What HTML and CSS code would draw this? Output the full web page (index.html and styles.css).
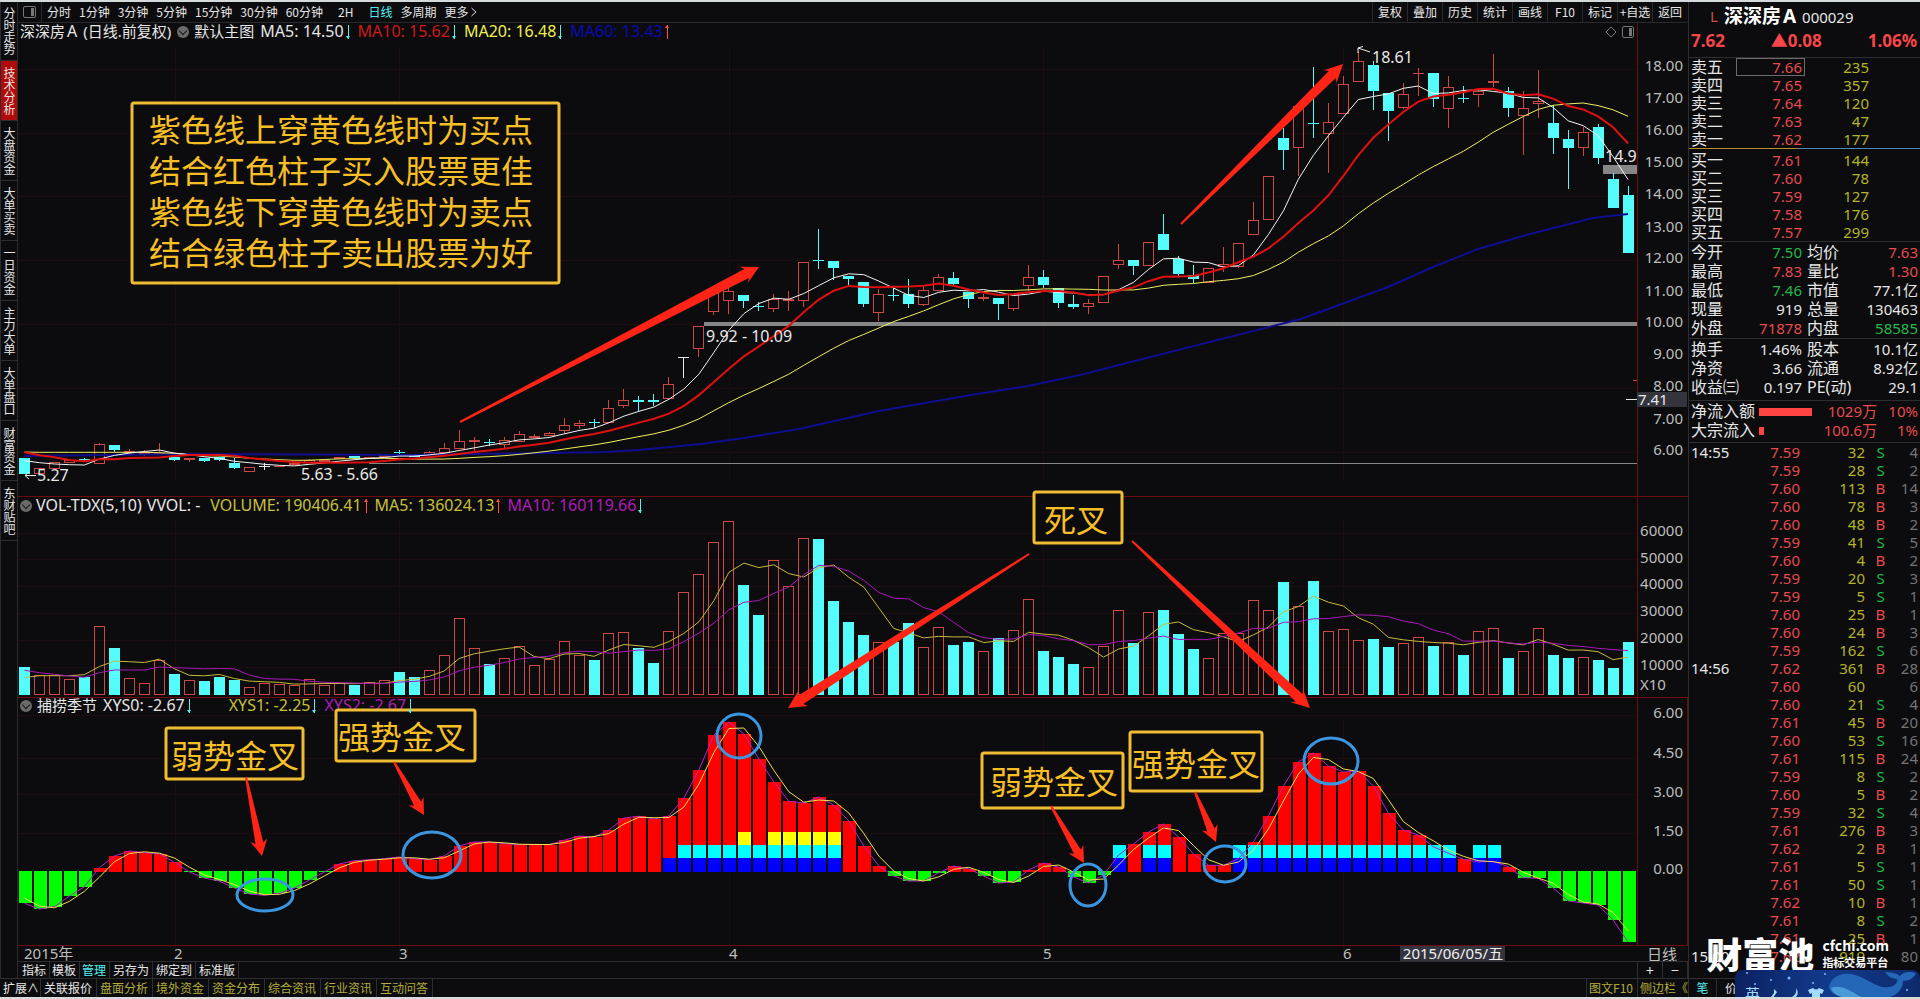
FILE: index.html
```html
<!DOCTYPE html>
<html lang="zh-CN">
<head>
<meta charset="utf-8">
<title>深深房A 000029</title>
<link rel="stylesheet" href="styles.css">
</head>
<body>
<div class="app">
  <div class="left">
    <div class="work">
      <nav class="side">
        <button>分时走势</button>
        <button class="active">技术分析</button>
        <button>大盘资金</button>
        <button>大单买卖</button>
        <button>一日资金</button>
        <button>主力大单</button>
        <button>大单盘口</button>
        <button>财富资金</button>
        <button>东财贴吧</button>
      </nav>
      <main class="main">
        <header class="toolbar">
          <button class="panel-btn" aria-label="面板"><svg width="13" height="12" viewBox="0 0 13 12"><rect x=".5" y=".5" width="12" height="11" rx="1.5" fill="none" stroke="#777"/><rect x="8" y="2" width="3" height="8" fill="#777"/></svg></button>
          <div class="periods">
            <button>分时</button><button>1分钟</button><button>3分钟</button><button>5分钟</button><button>15分钟</button><button>30分钟</button><button>60分钟</button><button class="wide">2H</button><button class="on">日线</button><button>多周期</button><button class="more">更多<svg width="8" height="10" viewBox="0 0 8 10"><path d="M1.500 1L6 5L1.500 9" fill="none" stroke="#ddd"/></svg></button>
          </div>
          <div class="tools">
            <button>复权</button><button>叠加</button><button>历史</button><button>统计</button><button>画线</button><button>F10</button><button>标记</button><button>+自选</button><button>返回</button>
          </div>
        </header>
        <div class="stage">
          <div class="legend legend-1">
            <span class="cjk">深深房<span class="lat">A</span></span>
            <span class="cjk">(日线.前复权)</span>
            <i class="drop"></i>
            <span class="cjk">默认主图</span>
            <span class="val">MA5: 14.50<b class="down"></b></span>
            <span class="val red">MA10: 15.62<b class="down"></b></span>
            <span class="val yellow">MA20: 16.48<b class="down"></b></span>
            <span class="val blue">MA60: 13.43<b class="up"></b></span>
            <svg class="pane-icons" width="30" height="12" viewBox="0 0 30 12"><path d="M6 1L11 6L6 11L1 6Z" fill="none" stroke="#777"/><rect x="17.500" y=".5" width="11" height="11" rx="1.500" fill="none" stroke="#777"/><rect x="24" y="2" width="3" height="8" fill="#777"/></svg>
          </div>
          <div class="legend legend-2">
            <i class="drop"></i>
            <span>VOL-TDX(5,10)</span>
            <span>VVOL: -</span>
            <span class="val olive first">VOLUME: 190406.41<b class="up"></b></span>
            <span class="val olive">MA5: 136024.13<b class="up"></b></span>
            <span class="val purple">MA10: 160119.66<b class="down"></b></span>
          </div>
          <div class="legend legend-3">
            <i class="drop"></i>
            <span class="cjk">捕捞季节</span>
            <span class="val">XYS0: -2.67<b class="down"></b></span>
            <span class="val olive second">XYS1: -2.25<b class="down"></b></span>
            <span class="val purple">XYS2: -2.67<b class="down"></b></span>
          </div>
          <svg id="chart" class="chart" viewBox="18 23 1670 938" role="img" aria-label="K线图"></svg>
        </div>
        <div class="indicators">
          <div class="tabs">
            <button>指标</button><button>模板</button><button class="on">管理</button><button>另存为</button><button>绑定到</button><button>标准版</button>
          </div>
          <div class="zoomers"><button>+</button><button>−</button></div>
        </div>
      </main>
    </div>
    <footer class="bottom">
      <button class="white expand">扩展∧</button><button class="white">关联报价</button><button>盘面分析</button><button>境外资金</button><button>资金分布</button><button>综合资讯</button><button>行业资讯</button><button>互动问答</button>
      <span class="right"><button>图文F10</button><button>侧边栏《</button></span>
    </footer>
  </div>

  <aside class="quote">
    <h1 class="name"><span class="mark">L</span><span class="stock">深深房<span class="share">A</span></span><span class="code">000029</span></h1>
    <div class="last"><span>7.62</span><span>▲0.08</span><span>1.06%</span></div>
    <table class="book sells">
      <tr><th>卖五</th><td class="boxed">7.66</td><td>235</td><td></td></tr>
      <tr><th>卖四</th><td>7.65</td><td>357</td><td></td></tr>
      <tr><th>卖三</th><td>7.64</td><td>120</td><td></td></tr>
      <tr><th>卖二</th><td>7.63</td><td>47</td><td></td></tr>
      <tr><th>卖一</th><td>7.62</td><td>177</td><td></td></tr>
    </table>
    <div class="split"></div>
    <table class="book buys">
      <tr><th>买一</th><td>7.61</td><td>144</td><td></td></tr>
      <tr><th>买二</th><td>7.60</td><td>78</td><td></td></tr>
      <tr><th>买三</th><td>7.59</td><td>127</td><td></td></tr>
      <tr><th>买四</th><td>7.58</td><td>176</td><td></td></tr>
      <tr><th>买五</th><td>7.57</td><td>299</td><td></td></tr>
    </table>
    <table class="stats">
      <tr><th>今开</th><td class="green">7.50</td><th>均价</th><td class="red">7.63</td></tr>
      <tr><th>最高</th><td class="red">7.83</td><th>量比</th><td class="red">1.30</td></tr>
      <tr><th>最低</th><td class="green">7.46</td><th>市值</th><td>77.1亿</td></tr>
      <tr><th>现量</th><td>919</td><th>总量</th><td>130463</td></tr>
      <tr><th>外盘</th><td class="red">71878</td><th>内盘</th><td class="green">58585</td></tr>
    </table>
    <table class="stats last-stats">
      <tr><th>换手</th><td>1.46%</td><th>股本</th><td>10.1亿</td></tr>
      <tr><th>净资</th><td>3.66</td><th>流通</th><td>8.92亿</td></tr>
      <tr><th>收益㈢</th><td>0.197</td><th>PE(动)</th><td>29.1</td></tr>
    </table>
    <div class="flow">
      <div class="flow-row"><span class="label">净流入额</span><span class="track"><i style="width:100%"></i></span><span>1029万</span><span>10%</span></div>
      <div class="flow-row"><span class="label">大宗流入</span><span class="track"><i style="width:10%"></i></span><span>100.6万</span><span>1%</span></div>
    </div>
    <div class="ticks"><table id="ticks"></table></div>
    <div class="quote-foot"><button class="on">笔</button><button>价</button></div>
    <div class="brand"><strong>财富池</strong><span><b>cfchi.com</b><em>指标交易平台</em></span></div>
    <div class="ime">
      <svg viewBox="0 0 185 28" preserveAspectRatio="xMaxYMin slice">
        <defs><linearGradient id="sea" x1="0" x2="1"><stop offset="0" stop-color="#0c2160"/><stop offset=".5" stop-color="#123a8c"/><stop offset="1" stop-color="#0e2a6c"/></linearGradient></defs>
        <rect width="185" height="40" rx="8" fill="url(#sea)"/>
        <path d="M94 17C96 6 108 1 120 5C134 9 142 19 154 17C160 16 163 12 162 9C156 9 152 5 150 2C156 2 161 3 165 6C168 2 174 1 181 3C179 8 174 11 168 11C168 20 160 28 148 28H112C103 27 95 23 94 17Z" fill="#2466b8"/>
        <path d="M96 18C106 14 114 20 128 28H112C103 27 97 23 96 18Z" fill="#4b9ad8"/>
        <g fill="#7db8ff"><circle cx="12" cy="3" r="1"/><circle cx="36" cy="10" r="1"/><circle cx="54" cy="8" r="1.500"/><circle cx="90" cy="4" r="1"/><circle cx="78" cy="13" r="1"/><circle cx="20" cy="14" r="1"/><circle cx="172" cy="20" r="1"/></g>
        <text x="10" y="30" class="ime-text">英</text>
        <g fill="#a4dcff"><path d="M39 19L42 22L38 28L36 27L39 23Z"/><path d="M61 18C64 22 63 27 58 28H55C60 26 62 23 61 18Z"/><path d="M73 20L78 18Q81 21 84 18L89 20L87 24L85 23V30H77V23L75 24Z"/></g>
      </svg>
    </div>
  </aside>
</div>
<script src="chart.js"></script>
</body>
</html>
```

FILE: styles.css
```css
* { box-sizing: border-box; }
body {
  margin: 0;
  background: #0c0c0e;
  color: #e6e6e6;
  font-family: "Noto Sans", "Noto Sans CJK SC", sans-serif;
  font-size: 15px;
  overflow: hidden;
}
button {
  margin: 0; padding: 0; border: 0; background: none; color: #e6e6e6;
  font: 12px/16px "Noto Sans CJK SC", sans-serif; white-space: nowrap; cursor: pointer;
}
.app {
  display: grid;
  grid-template-columns: minmax(0, 1fr) 232px;
  height: 100vh;
  border-top: 2px solid #d6dadb;
  border-bottom: 2px solid #d6dadb;
}
.left { display: flex; flex-direction: column; min-height: 0; min-width: 0; }
.work { display: flex; flex: 1; min-height: 0; }

.side { width: 18px; border-right: 1px solid #2c2c2e; border-left: 1px solid #2c2c2e; }
.side button {
  display: flex; align-items: center; justify-content: center;
  width: 16px; height: 60px; border-bottom: 1px solid #2c2c2e;
  writing-mode: vertical-rl; text-orientation: upright; line-height: 16px; font-size: 12px;
}
.side button:first-child { height: 59px; }
.side .active { background: #b00a0a; }

.main { display: flex; flex-direction: column; flex: 1; min-width: 0; }
.toolbar { display: flex; align-items: stretch; height: 21px; border-bottom: 1px solid #2a2a2c; }
.panel-btn { width: 24px; padding-left: 5px; border-right: 1px solid #2a2a2c; display: flex; align-items: center; }
.periods { display: flex; gap: 8px; padding-left: 5px; align-items: center; }
.periods .wide { padding: 0 7px; }
.periods .more { display: flex; align-items: center; gap: 2px; }
.on { color: #54f0f0; }
.tools { display: flex; margin: 0 1px 0 auto; }
.tools button { width: 35px; border-left: 1px solid #2a2a2c; text-align: center; }

.stage { display: grid; grid-template-rows: 474fr 200fr 264fr; grid-template-columns: minmax(0, 1fr); flex: 1; min-height: 0; }
.chart { grid-area: 1 / 1 / -1 / -1; width: 100%; height: 100%; min-height: 0; overflow: visible; }
.legend { grid-column: 1; display: flex; align-items: center; height: 17px; font-size: 16px; line-height: 17px; padding-left: 2px; white-space: nowrap; gap: 6px; }
.legend-1 { grid-row: 1; padding-right: 53px; }
.legend-2 { grid-row: 2; gap: 5px; }
.legend-3 { grid-row: 3; }
.cjk { font-size: 15px; }
.lat { font-size: 16px; margin-left: 2px; }
.val { display: flex; align-items: center; gap: 1px; }
.legend .first { margin-left: 5px; }
.legend .second { margin-left: 30px; }
.drop { width: 12px; height: 12px; margin-right: -1px; border-radius: 50%; background: #6a6a6a; display: grid; place-items: center; }
.drop::after { content: ""; width: 5px; height: 5px; border: solid #1a1a1a; border-width: 0 1px 1px 0; transform: translateY(-1px) rotate(45deg); }
.down, .up { position: relative; width: 7px; height: 14px; color: #54f0f0; background: linear-gradient(currentColor, currentColor) center / 1px 100% no-repeat; }
.up { color: #ff5040; }
.down::after, .up::after { content: ""; position: absolute; left: 1px; border: 3px solid transparent; border-left-width: 2px; border-right-width: 2px; }
.down::after { bottom: 0; border-top-color: currentColor; border-bottom: 0; }
.up::after { top: 0; border-bottom-color: currentColor; border-top: 0; }
.pane-icons { margin-left: auto; }
.red { color: #f0464a; }
.green { color: #22b84c; }
.legend .red { color: #d01818; }
.yellow { color: #f0f050; }
.blue { color: #0a0ab4; }
.olive { color: #c8c03c; }
.purple { color: #b01cb8; }

.indicators { display: flex; justify-content: space-between; height: 17px; border-top: 1px solid #2e2e30; }
.tabs { display: flex; }
.tabs button { padding: 0 3px 0 2px; border-right: 1px solid #2e2e30; }
.tabs button:first-child { padding-left: 4px; }
.tabs button:nth-child(n+4) { padding: 0 3px; }
.zoomers { display: flex; width: 51px; border-left: 1px solid #2e2e30; }
.zoomers button { flex: 1; border-right: 1px solid #2e2e30; font-size: 14px; }
.bottom { display: flex; height: 19px; border-top: 1px solid #2e2e30; }
.bottom button { padding: 0 4px 0 3px; border-right: 1px solid #2e2e30; color: #b4ac3c; }
.bottom .expand { padding-right: 1px; }
.bottom .white { color: #e6e6e6; }
.bottom .right { display: flex; margin-left: auto; border-left: 1px solid #2e2e30; }
.bottom .right button { padding-left: 2px; }
.bottom .right button:last-child { padding-right: 0; border-right: 0; }

.grid-line { stroke: #2a0e10; stroke-dasharray: 1 1; }
.frame { stroke: #6c0c0e; fill: none; }
.gap { fill: #868686; }
.rise { fill: none; stroke: #cc4844; }
.flat { stroke: #e8e8e8; fill: #e8e8e8; }
.fall { fill: #54fcfc; stroke: #54fcfc; }
.bar { shape-rendering: crispEdges; }
.line { fill: none; stroke-width: 1; }
.line.thick { stroke-width: 2; }
.pos { fill: #ff0000; }
.neg { fill: #00ff00; }
.axis { fill: #bebebe; font-size: 15px; }
.note { fill: #e8e8e8; font-size: 16px; }
.call rect { fill: #0c0c0e; stroke: #f0bc34; stroke-width: 3; }
.call text { fill: #f6bf26; font-size: 32px; font-family: "Noto Sans CJK SC", sans-serif; font-weight: 400; }
.arrow { fill: #ff2416; }
.ring { fill: none; stroke: #3a96e0; stroke-width: 3; }

.quote { position: relative; display: flex; flex-direction: column; border-left: 1px solid #2e2e30; min-height: 0; overflow: hidden; }
.name { display: flex; align-items: center; height: 27px; margin: 0; padding-left: 21px; font-weight: 400; }
.mark { color: #d8484a; font-size: 15px; margin-right: 6px; }
.stock { color: #fff; font-size: 19px; font-weight: 700; margin-right: 6px; line-height: 24px; }
.share { margin-left: 2px; }
.code { font-size: 15px; padding-top: 3px; }
.last { display: flex; justify-content: space-between; height: 29px; padding: 0 3px 0 2px; line-height: 24px; font-size: 17px; font-weight: 700; color: #f8464a; border-bottom: 1px solid #2e2e30; }
table { border-collapse: collapse; table-layout: fixed; width: 100%; }
th { padding: 0 0 0 2px; font-weight: 400; font-size: 16px; text-align: left; white-space: nowrap; }
td { padding: 0; text-align: right; white-space: nowrap; }
.book tr, #ticks tr { height: 18px; line-height: 18px; }
.book th:first-child { width: 47px; }
.book td:nth-child(2) { width: 69px; padding-right: 3px; color: #e84a4e; }
.book td:nth-child(3) { width: 64px; color: #b4b428; }
.book .boxed { outline: 1px solid #6c6c6c; outline-offset: -1px; }
.split { height: 1px; background: linear-gradient(90deg, #b8902c 46%, #4a88b8 48%); }
.buys { margin-top: 2px; }
.stats { border-top: 1px solid #2e2e30; border-collapse: separate; border-spacing: 0; padding-top: 1px; }
.stats tr { height: 19px; line-height: 19px; }
.stats th { width: 51px; }
.stats td:nth-child(2) { width: 62px; }
.stats th:nth-child(3) { padding-left: 5px; }
.stats td:last-child { padding-right: 2px; }
.stats .red { color: #e84a4e; }
.last-stats { padding-bottom: 3px; }
.flow { border-top: 1px solid #2e2e30; border-bottom: 1px solid #2e2e30; padding: 1px 0 2px; color: #e84a4e; }
.flow-row { display: grid; grid-template-columns: 70px 53px 1fr 41px; height: 19px; line-height: 19px; padding-right: 2px; align-items: center; text-align: right; }
.flow .label { color: #e6e6e6; font-size: 16px; padding-left: 2px; text-align: left; }
.track { display: block; height: 8px; }
.track i { display: block; height: 8px; background: #ff4444; }
.ticks { flex: 1; min-height: 0; overflow: hidden; }
#ticks td:first-child { width: 61px; padding-left: 2px; text-align: left; color: #e6e6e6; }
#ticks td { color: #e84a4e; }
#ticks td:nth-child(2) { width: 50px; }
#ticks td:nth-child(3) { width: 65px; color: #b4b428; }
#ticks td:nth-child(4) { width: 31px; text-align: center; }
#ticks td:nth-child(4).s { color: #22b84c; }
#ticks td:last-child { padding-right: 2px; color: #747474; }
.quote-foot { display: flex; height: 19px; border-top: 1px solid #2e2e30; }
.quote-foot button { width: 28px; padding-left: 0; border-right: 1px solid #2e2e30; }
.quote-foot button + button { width: 36px; padding-right: 0; border-right: 0; padding-left: 8px; text-align: left; }
.brand { position: absolute; right: 31px; bottom: 26px; display: flex; align-items: center; gap: 8px; color: #fff; font-family: "Noto Sans CJK SC", sans-serif; }
.brand strong { font-size: 36px; line-height: 36px; font-weight: 900; }
.brand span { display: flex; flex-direction: column; }
.brand b { font-size: 14px; line-height: 18px; }
.brand em { font-size: 11px; line-height: 16px; font-weight: 700; font-style: normal; }
.ime { position: absolute; right: 0; bottom: 0; width: 185px; height: 27px; }
.ime svg { display: block; width: 100%; height: 100%; }
.ime-text { font-size: 15px; fill: #a4dcff; font-family: "Noto Sans CJK SC", sans-serif; }
```

FILE: chart.js
```js
const NS = "http://www.w3.org/2000/svg";
const chart = document.getElementById("chart");

function el(name, attrs, text) {
  const node = document.createElementNS(NS, name);
  for (const key in attrs) node.setAttribute(key, attrs[key]);
  if (text !== undefined) node.textContent = text;
  chart.appendChild(node);
  return node;
}
const rect = (x, y, width, height, cls) => el("rect", { x, y, width, height, class: cls });
const hline = (x1, x2, y, cls) => el("path", { d: `M${x1} ${y}H${x2}`, class: cls });
const vline = (x, y1, y2, cls) => el("path", { d: `M${x} ${y1}V${y2}`, class: cls });
const label = (x, y, text, cls, anchor) => el("text", { x, y, class: cls, "text-anchor": anchor || "start" }, text);

const X = i => 24 + 14.987 * i;
const R = Math.round;

/* Grid and frames */
[69, 133, 196, 260, 324, 388, 452, 559, 586, 613, 640, 667, 533, 715, 758, 794, 833].forEach(y => hline(19, 1637, y + 0.5, "grid-line"));
[175, 399, 729, 1043, 1343].forEach(x => {
  vline(x + 0.5, 48, 480, "grid-line");
  vline(x + 0.5, 520, 695, "grid-line");
  vline(x + 0.5, 720, 960, "grid-line");
});
hline(18, 1688, 496.5, "frame");
hline(18, 1688, 697.5, "frame");
hline(18, 1688, 945.5, "frame");
vline(1637.5, 23, 945, "frame");
vline(1687.5, 697, 945, "frame");

/* Axis labels */
[66, 98, 130, 162, 194, 227, 258, 291, 322, 354, 386, 419, 450].forEach((y, i) => label(1683, y + 5, (18 - i).toFixed(2), "axis", "end"));
[530, 557, 583, 610, 637, 664].forEach((y, i) => label(1683, y + 6, 60000 - i * 10000, "axis", "end"));
label(1640, 690, "X10", "axis");
[712, 752, 791, 830, 868].forEach((y, i) => label(1683, y + 6, (6 - i * 1.5).toFixed(2), "axis", "end"));
label(24, 959, "2015年", "axis");
[[174, 2], [399, 3], [729, 4], [1043, 5], [1343, 6]].forEach(([x, m]) => label(x, 959, m, "axis"));
rect(1400, 946, 105, 15, "").setAttribute("fill", "#34343e");
label(1453, 959, "2015/06/05/五", "axis", "middle").setAttribute("style", "fill:#f0f0f0");
label(1662, 960, "日线", "axis", "middle");

/* Price gaps */
rect(704, 322, 933, 4, "gap");
rect(1603, 165, 34, 9, "gap");
rect(369, 463, 1268, 1, "gap");

/* Candles: kind, body top, body bottom, high, low in thirds of a pixel */
const candles = [];
function add(offset, rows) {
  rows.trim().split(";").forEach(row => {
    const [kind, a, b, h, l] = row.trim().split(" ");
    candles.push({ kind, top: (+a + offset) / 3, bottom: (+b + offset) / 3, high: (+(h || a) + offset) / 3, low: (+(l || b) + offset) / 3 });
  });
}
add(900, `c 474 522;r 505 523;r 487 506;r 481 490;c 476 480 474 482;r 433 491 430 491;c 435 450 435 456;r 453 460 447 463;r 456 461 450 468;r 458 463 428 466;
c 472 480 470 483;r 474 480 474 486;c 474 482 474 487;c 472 480 472 482;c 488 504 474 507;r 501 515;w 498 500 488 510;r 497 500;r 489 496;r 480 488 477 488;
r 480 487;r 472 478;c 469 474 469 478;r 470 476;r 466 472;c 457 459 450 464;c 466 472;r 457 465 453 465;r 445 459 428 459;r 424 446 389 446;
r 421 427 410 452;c 426 430 416 438;r 421 434 410 446;r 403 427 394 427;r 408 413 402 415;r 400 409 395 409;r 376 392 355 398;r 370 377 359 388;c 365 369 358 384;r 325 370 300 370;r 301 317 267 323`);
add(660, `c 541 545 528 572;c 541 545 522 557;r 493 536 471 540;w 411 412 411 474;r 319 388 319 411;r 218 275 210 285;r 214 244 190 282;c 225 242 225 263;c 258 260 245 272;
r 237 266 222 275;r 237 244 212 272;r 127 244 127 262;c 121 123 27 147;c 123 143 123 179;c 168 177 168 195;c 187 251 187 261;r 223 278 207 302;c 225 227 205 243;c 223 251 177 263;
r 211 254 200 258;r 172 213 162 213;c 174 192 156 194;c 217 237 217 264;r 231 238 222 243;c 234 251 234 299;r 222 266 222 272;r 171 199 135 212;c 171 194 150 205;c 205 248 203 263;c 252 260 225 266`);
add(0, `r 909 922 897 942;r 829 908;r 780 794 732 806;c 780 797 780 824;r 727 797;c 702 749 642 749;c 777 822 768 828;c 826 836 796 850;r 805 848;
r 793 801 741 815;r 730 800 730 805;r 661 706 607 706;r 529 661;c 414 450 384 510;r 318 445 318 528;c 369 371 201 414;r 367 401 308 519;r 253 343 228 343;r 184 247 152 247;
c 195 272 183 330;c 279 332 279 423;r 283 323 250 328;r 219 223 204 288;c 219 298 219 321;r 262 328 228 383;c 293 296 257 308;r 272 286 268 321;r 243 248 162 262;c 273 325 262 350;
r 325 347 273 464;r 304 313 210 355;c 369 415 315 461;c 417 443 390 566;r 397 445 380 469;c 380 473 371 491;c 537 623 520 623;c 585 758 558 758`);

const KIND = { r: "rise", c: "fall", w: "flat" };
candles.forEach((k, i) => {
  const x = R(X(i)), cls = KIND[k.kind] + " bar";
  const t = R(k.top) + 0.5, b = Math.max(R(k.bottom) - 0.5, t);
  el("path", { d: `M${x + 0.5} ${R(k.high)}V${t}M${x + 0.5} ${b}V${R(k.low)}`, class: cls });
  if (b - t < 1) hline(x - 5, x + 6, t, cls);
  else rect(x - 4.5, t, 10, b - t, cls);
});

/* Moving averages */
function average(values, n, lead) {
  return values.map((v, i) => {
    if (i < n - 1) return lead[i];
    let sum = 0;
    for (let k = 0; k < n; k++) sum += values[i - k];
    return sum / n;
  });
}
function poly(values, stroke, cls) {
  el("polyline", { points: values.map((y, i) => `${(X(i) + 0.5).toFixed(1)},${y.toFixed(1)}`).join(" "), stroke, class: "line " + (cls || "") });
}
const closes = candles.map(k => (k.kind === "c" ? k.bottom : k.top));
const third = (offset, list) => list.map(v => (v + offset) / 3);
el("polyline", { points: "24,456 190,454 408,455 549,453 604,452 639,450 701,444 744,438 799,429 879,411 971,395 1028,386 1080,375 1190,347 1301,319 1388,287 1433,267 1478,249 1530,234 1593,218 1628,214", stroke: "#0e0e90", class: "line thick" });
poly(average(closes, 20, third(900, [456, 457, 457, 457, 457, 457, 457, 457, 457, 458, 460, 464, 467, 468, 471, 475, 477, 479, 481])), "#f0f060");
poly(average(closes, 5, third(900, [482, 488, 492, 494])), "#f4f4f4");
poly(average(closes, 10, third(900, [457, 466, 472, 480, 484, 478, 478, 474, 473])), "#e01010", "thick");

/* Volume */
const volume = [531, 556, 555, 568, 561, 408, 474, 565, 580, 511, 552, 571, 573, 561, 570, 592, 580, 583, 586, 568, 586, 580, 585, 577, 571, 546, 561, 541, 496, 384,
  475, 522, 505, 469, 526, 508, 454, 496, 510, 430, 427, 474, 519, 424, 307, 253, 157, 94, 285, 375, 211, 289, 145, 147, 333, 396, 435, 457, 456, 399,
  472, 412, 465, 456, 484, 445, 421, 328, 483, 501, 522, 532, 469, 361, 459, 367, 360, 432, 477, 505, 430, 430, 331, 361, 276, 349, 273, 424, 418, 451,
  447, 471, 460, 442, 468, 457, 495, 424, 415, 504, 484, 415, 495, 504, 502, 510, 534, 456].map(v => v / 3 + 490);
const volumeFalls = new Set([0, 4, 6, 10, 12, 13, 14, 22, 25, 26, 31, 38, 41, 42, 48, 49, 53, 54, 55, 56, 58, 59, 62, 63, 65, 68, 69, 70, 74, 76, 77, 78, 84, 86, 90, 91, 94, 96, 99, 102, 103, 105, 106, 107]);
volume.forEach((y, i) => rect(R(X(i)) - 4.5, R(y) + 0.5, 10, 694.5 - R(y) - 0.5, (volumeFalls.has(i) ? "fall" : "rise") + " bar"));
poly(average(volume, 5, third(1470, [563, 557, 557, 557])), "#c8b83c");
poly(average(volume, 10, third(1470, [541, 548, 553, 558, 562, 548, 540, 540, 540])), "#a818b8");

/* Season indicator */
const season = [1240, 1257, 1250, 1218, 1190, 1133, 1098, 1083, 1088, 1091, 1117, 1146, 1164, 1173, 1194, 1212, 1216, 1210, 1194, 1170, 1146, 1122, 1112, 1109, 1106, 1101, 1106, 1109, 1098, 1068,
  1056, 1056, 1061, 1064, 1063, 1064, 1051, 1038, 1041, 1020, 984, 979, 987, 978, 924, 840, 735, 696, 732, 807, 876, 934, 939, 921, 945, 993, 1068, 1128, 1158, 1173,
  1173, 1148, 1128, 1136, 1158, 1179, 1176, 1140, 1119, 1131, 1161, 1179, 1155, 1095, 1062, 1026, 1002, 1041, 1092, 1126, 1126, 1106, 1056, 978, 888, 816, 789, 828, 846, 843,
  888, 969, 1020, 1035, 1070, 1090, 1108, 1116, 1114, 1130, 1163, 1165, 1194, 1233, 1239, 1245, 1290, 1356].map(v => v / 3 + 490);
const range = (a, b) => Array.from({ length: b - a + 1 }, (_, k) => a + k);
season.forEach((y, i) => {
  const x = R(X(i)) - 5, top = R(y);
  if (y < 871) rect(x, top, 13, 872 - top, "pos");
  else rect(x, 871, 13, Math.max(top - 871, 1), "neg");
});
const second = [73, 75, 76, ...range(81, 95), 97, 98];
[[[...range(43, 54), ...second], 858, 14, "#0000ff"], [[...range(44, 54), ...second], 845, 13, "#00ffff"], [[48, ...range(50, 54)], 832, 13, "#ffff00"]].forEach(([list, y, h, fill]) => {
  list.forEach(i => rect(R(X(i)) - 5, y, 13, h, "").setAttribute("fill", fill));
});
poly(season, "#b420c8");
poly(average(season, 2, [898]), "#f0e050");

/* Notes on the price pane */
label(706, 342, "9.92 - 10.09", "note");
label(301, 480, "5.63 - 5.66", "note");
label(37, 481, "5.27", "note");
label(1372, 63, "18.61", "note");
label(1605, 162, "14.9", "note");
el("path", { d: "M36 475.500H25M29 472L25 475.500L29 479M1370 52L1358 48M1363 46.500L1358 48V53", stroke: "#eee", fill: "none" });
rect(1637, 392, 50, 15, "").setAttribute("fill", "#34343c");
label(1638, 405, "7.41", "note").setAttribute("style", "font-size:15px");
hline(1626, 1637, 399.5, "flat");
hline(1633, 1637, 380.5, "rise");

/* Callouts */
function callout(x, y, w, h, tx, baseline, lines) {
  const g = el("g", { class: "call" });
  g.appendChild(rect(x, y, w, h, "")).setAttribute("rx", 2);
  lines.forEach((t, i) => g.appendChild(label(tx, baseline + i * 41, t, "")));
}
callout(132, 103, 427, 180, 149, 142, ["紫色线上穿黄色线时为买点", "结合红色柱子买入股票更佳", "紫色线下穿黄色线时为卖点", "结合绿色柱子卖出股票为好"]);
callout(166, 728, 137, 51, 171, 768, ["弱势金叉"]);
callout(336, 710, 139, 51, 338, 749, ["强势金叉"]);
callout(1034, 492, 88, 51, 1044, 532, ["死叉"]);
callout(982, 753, 141, 55, 990, 794, ["弱势金叉"]);
callout(1130, 732, 132, 59, 1132, 776, ["强势金叉"]);

/* Tapered arrows */
function arrow(x1, y1, x2, y2, shaft, head, length) {
  const d = Math.hypot(x2 - x1, y2 - y1), ux = (x2 - x1) / d, uy = (y2 - y1) / d;
  const p = (along, side) => `${(x1 + ux * along - uy * side).toFixed(1)},${(y1 + uy * along + ux * side).toFixed(1)}`;
  const neck = d - length;
  el("polygon", { class: "arrow", points: [p(0, 1), p(neck + 3, shaft / 2), p(neck, head / 2), p(d, 0), p(neck, -head / 2), p(neck + 3, -shaft / 2), p(0, -1)].join(" ") });
}
arrow(460, 422, 759, 267, 10, 18, 17);
arrow(1181, 224, 1343, 64, 10, 18, 18);
arrow(1029, 554, 788, 708, 10, 18, 18);
arrow(1132, 541, 1310, 708, 10, 18, 18);
arrow(246, 777, 262, 856, 8, 17, 16);
arrow(394, 762, 424, 815, 8, 17, 16);
arrow(1051, 806, 1084, 863, 8, 17, 16);
arrow(1195, 792, 1216, 842, 8, 17, 16);

[[432, 855, 29, 23], [265, 895, 28, 16], [739, 736, 22, 22], [1088, 885, 18, 21], [1331, 761, 27, 23], [1225, 864, 21, 18]].forEach(([cx, cy, rx, ry]) => el("ellipse", { cx, cy, rx, ry, class: "ring" }));

/* Tick list */
const ticks = `14:55 7.59 32 S 4|- 7.59 28 S 2|- 7.60 113 B 14|- 7.60 78 B 3|- 7.60 48 B 2|- 7.59 41 S 5|- 7.60 4 B 2|- 7.59 20 S 3|- 7.59 5 S 1|- 7.60 25 B 1|- 7.60 24 B 3|- 7.59 162 S 6|14:56 7.62 361 B 28|- 7.60 60 - 6|- 7.60 21 S 4|- 7.61 45 B 20|- 7.60 53 S 16|- 7.61 115 B 24|- 7.59 8 S 2|- 7.60 5 B 2|- 7.59 32 S 4|- 7.61 276 B 3|- 7.62 2 B 1|- 7.61 5 S 1|- 7.61 50 S 1|- 7.62 10 B 1|- 7.61 8 S 2|- 7.61 25 B 1|15:00 7.62 919 - 80`;
const table = document.getElementById("ticks");
ticks.split("|").forEach(line => {
  const row = table.insertRow();
  line.split(" ").forEach(value => {
    const cell = row.insertCell();
    cell.textContent = value === "-" ? "" : value;
    if (value === "S") cell.className = "s";
  });
});
```
